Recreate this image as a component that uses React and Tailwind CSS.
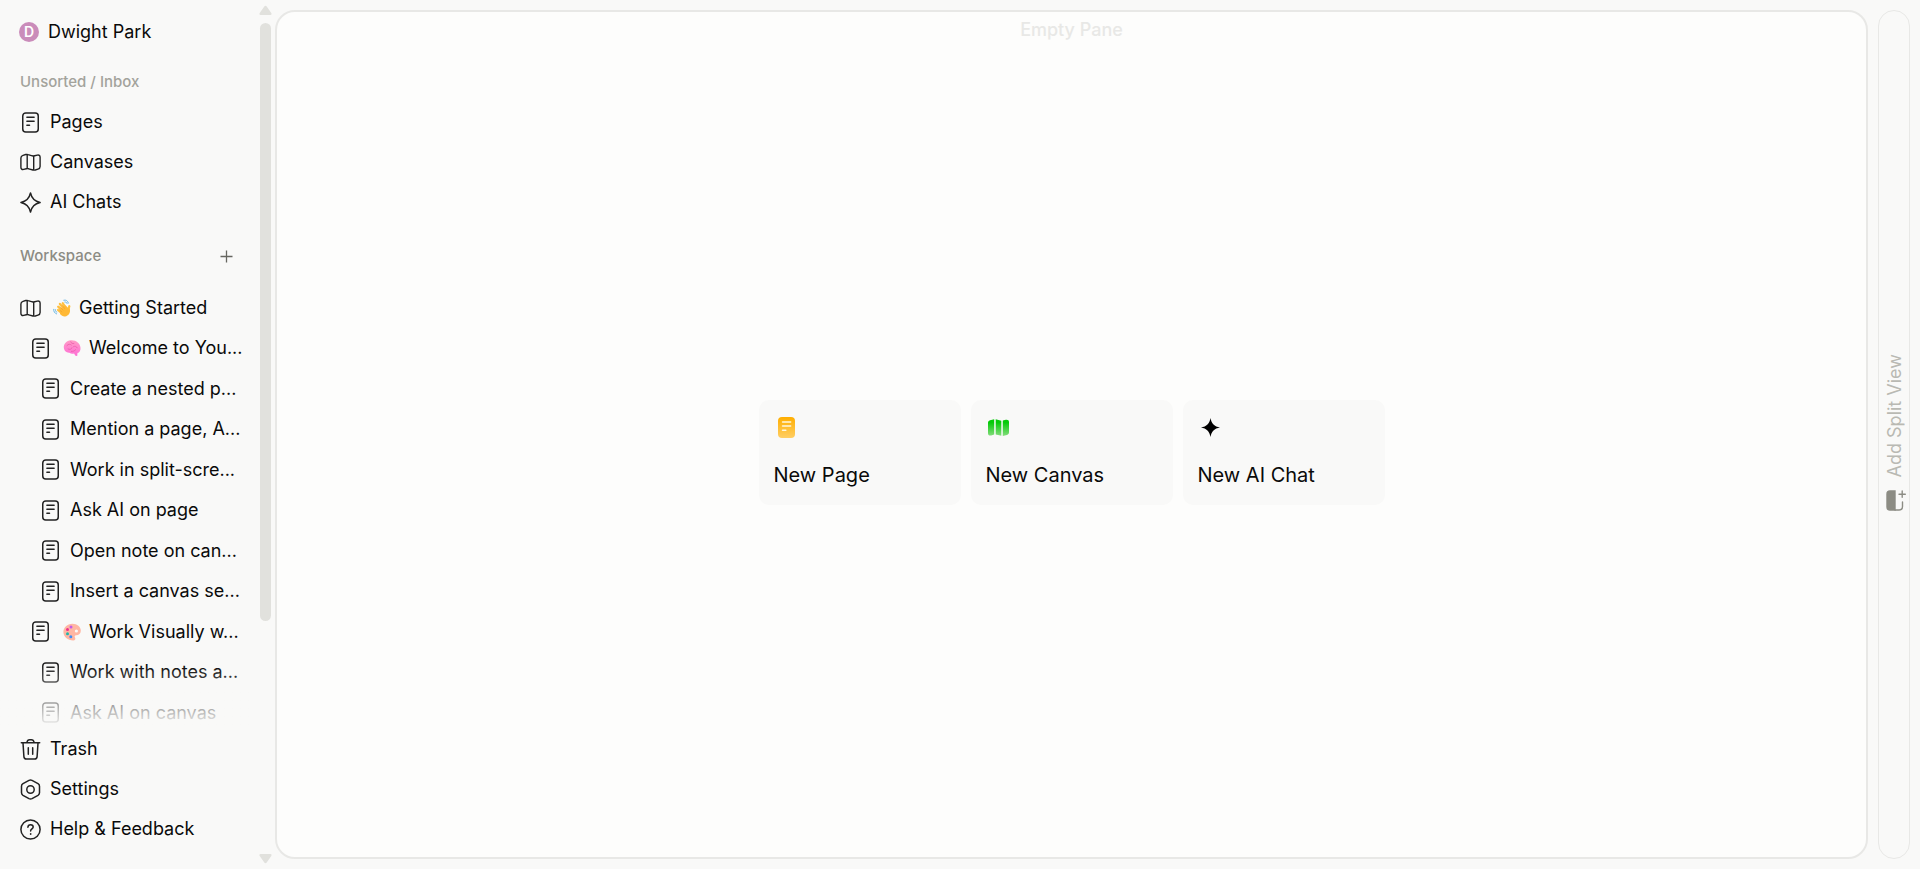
const ICON = "shrink-0";

const PageIcon = () => (
  <svg className={ICON} width="21" height="21" viewBox="0 0 21 21" fill="none" stroke="#222" strokeWidth="1.5" strokeLinecap="round">
    <rect x="2.75" y="0.9" width="15.5" height="19.2" rx="3" />
    <path d="M6.9 5.2h7.2M6.9 9.2h7.2M6.9 13.2h2.6" />
  </svg>
);

const MapIcon = () => (
  <svg className={ICON} width="21" height="21" viewBox="0 0 21 21" fill="none" stroke="#222" strokeWidth="1.4" strokeLinejoin="round">
    <path d="M.9 6c0-1.500.7-2.300 2.100-2.700l2.700-.8c.8-.2 1.600-.2 2.400.1l4.200 1.200c.8.200 1.600.2 2.400 0l2.600-.7c1.700-.4 2.800.4 2.800 2.100v9.300c0 1.400-.7 2.300-2.100 2.700l-2.700.8c-.8.2-1.600.2-2.400 0l-4.200-1.200c-.8-.2-1.600-.2-2.400 0l-2.600.6C2 17.800.9 17 .9 15.300zM7.200 2.600v14M13.700 4v14" />
  </svg>
);

const SparkIcon = () => (
  <svg className={ICON} width="21" height="21" viewBox="0 0 21 21" fill="none" stroke="#222" strokeWidth="1.5" strokeLinejoin="round">
    <path d="M10.5 .9C11.600 6.200 14.800 9.400 20.100 10.500 14.800 11.600 11.600 14.800 10.500 20.100 9.400 14.800 6.200 11.600 .9 10.500 6.200 9.400 9.400 6.200 10.500 .9z" />
  </svg>
);

const TrashIcon = () => (
  <svg className={ICON} width="21" height="21" viewBox="0 0 21 21" fill="none" stroke="#222" strokeWidth="1.5" strokeLinecap="round" strokeLinejoin="round">
    <path d="M1.300 3.800h18.400M3 4l.9 13.600c.1 1.500 1 2.400 2.500 2.400h8.200c1.500 0 2.400-.9 2.500-2.400L18 4M6.800 3.600C7.200 1.800 8.200.8 9.600.8h1.800c1.400 0 2.400 1 2.800 2.800M8.300 8.700v6.600M12.700 8.700v6.600" />
  </svg>
);

const SettingsIcon = () => (
  <svg className={ICON} width="21" height="21" viewBox="0 0 21 21" fill="none" stroke="#222" strokeWidth="1.5" strokeLinejoin="round">
    <path d="M9 1.300c1-.5 2-.5 3 0l6 3.400c1 .6 1.500 1.400 1.500 2.500v6.600c0 1.100-.5 1.900-1.500 2.500l-6 3.400c-1 .5-2 .5-3 0l-6-3.400c-1-.6-1.500-1.400-1.500-2.500V7.200c0-1.100.5-1.900 1.500-2.500z" />
    <circle cx="10.500" cy="10.500" r="3.700" />
  </svg>
);

const HelpIcon = () => (
  <svg className={ICON} width="21" height="21" viewBox="0 0 21 21" fill="none" stroke="#222" strokeWidth="1.5" strokeLinecap="round">
    <circle cx="10.500" cy="10.500" r="9.600" />
    <path d="M7.900 8.200c.1-1.600 1.200-2.500 2.700-2.500s2.600.9 2.600 2.300c0 1.900-2.600 2-2.600 4.100" />
    <circle cx="10.500" cy="15" r="0.400" fill="#222" strokeWidth="1" />
  </svg>
);

const WaveEmoji = () => (
  <svg className={ICON} width="18" height="18" viewBox="0 0 18 18" fill="none" strokeLinecap="round">
    <path d="M10.800 1.200c2.200-.6 3.900.5 4.600 2.800M11.800 3c1.200-.2 2 .4 2.300 1.500M.7 10.300c-.2 2.200.8 3.800 2.900 4.600M2.300 10.600c0 1.200.5 2.100 1.500 2.600" stroke="#6cb8e6" strokeWidth="1" />
    <path d="M5.200 7.800 10 12.500M6.900 4.900l5 6M9.800 4.300l4 6M5 11l4.600 4M16.300 7.200c-.8 1.500-.6 3-.4 4.500" stroke="#ffc03f" strokeWidth="2.300" />
    <path d="m7.200 9.500 5.300-3.300 4.300 4.500c.8 3-1.300 6.200-4.800 6.700-2 .2-3.500-.8-5-2.500z" fill="#ffb936" />
    <path d="m6.800 7.800 3.200 3.200M9 6.200l2.700 3.300M6.300 10.700l2.500 2.200" stroke="#ee9a2e" strokeWidth=".6" />
  </svg>
);

const BrainEmoji = () => (
  <svg className={ICON} width="18" height="18" viewBox="0 0 18 18" fill="none" strokeLinecap="round">
    <defs>
      <linearGradient id="brain" x1="0" y1="0" x2="0" y2="1">
        <stop stopColor="#ff9bc6" />
        <stop offset="1" stopColor="#ff6fd6" />
      </linearGradient>
    </defs>
    <path d="M.8 8.600C.5 5 3.500 1.800 7.800 1.300c5-.5 9.400 2.900 9.700 7.400.2 2.800-1 4.800-3 5.300l-.3 2.900-1.700-.2-1.500-2.100c-1.600.4-3.300.2-4.600-.8C3.300 14 1 11.800.8 8.600z" fill="url(#brain)" />
    <path d="M4 6.500c1.600-1.600 3-1.700 4.300-.5M7.700 2.800c.5 1.600 1.800 2 3.200 1.700M5 10c1.800 1 3.500.3 4-1.300M10.500 7.600c1.600-.8 3-.2 3.700 1.200M8.400 12.400c1.700.2 3.300-.5 4.300-1.700" stroke="#e858a8" strokeWidth=".7" />
  </svg>
);

const PaletteEmoji = () => (
  <svg className={ICON} width="18" height="18" viewBox="0 0 18 18">
    <path fillRule="evenodd" d="M.4 9C.4 4.500 4.300.8 9.300.8c5 0 8.500 3.200 8.500 7 0 3-2.200 4.600-4.700 4.500-1.600 0-1.700 1.200-1 2.400.7 1.300 0 2.700-1.800 2.700C4.700 17.400.4 13.600.4 9zM13.400 6.400a1.600 1.600 0 1 0 0 3.200 1.600 1.600 0 0 0 0-3.200z" fill="#ffb6a3" />
    <circle cx="8" cy="4" r="1.500" fill="#c45be8" />
    <circle cx="4.500" cy="6.600" r="1.500" fill="#f0308c" />
    <circle cx="4.500" cy="10.800" r="1.500" fill="#20b5ac" />
    <circle cx="7.800" cy="13.700" r="1.500" fill="#3d8df5" />
  </svg>
);

const NewPageIcon = () => (
  <svg width="25" height="25" viewBox="0 0 25 25" fill="none">
    <defs>
      <linearGradient id="page" x1="0" y1="0" x2="0" y2="1">
        <stop stopColor="#ffae00" />
        <stop offset="1" stopColor="#ffce63" />
      </linearGradient>
    </defs>
    <rect x="4" y="2" width="17" height="21" rx="4" fill="url(#page)" />
    <path d="M8.600 7h8M8.600 11h8M8.600 15.200h3.200" stroke="#fff7e0" strokeWidth="1.600" strokeLinecap="round" />
  </svg>
);

const NewCanvasIcon = () => (
  <svg width="25" height="25" viewBox="0 0 25 25">
    <defs>
      <linearGradient id="canvas" gradientUnits="userSpaceOnUse" x1="0" y1="4" x2="0" y2="21">
        <stop offset=".2" stopColor="#05cb08" />
        <stop offset="1" stopColor="#86dc7e" />
      </linearGradient>
    </defs>
    <path d="M8.200 4.300v15.200l-3 .9C3.300 20.900 2 20 2 18.200V8c0-1.500.7-2.400 2-2.800zM9.700 4.300l5.600 1.400v15l-5.600-1.300zM16.800 5.600l3-.8c1.900-.4 3.200.4 3.200 2.200v10.200c0 1.500-.7 2.300-2 2.700l-4.200 1z" fill="url(#canvas)" />
  </svg>
);

const NewChatIcon = () => (
  <svg width="25" height="25" viewBox="0 0 25 25">
    <path d="M12.500 3c1 5.600 3.900 8.500 9.500 9.500-5.600 1-8.500 3.900-9.500 9.500-1-5.600-3.900-8.500-9.500-9.500 5.600-1 8.500-3.900 9.500-9.500z" fill="#000" />
  </svg>
);

const SplitIcon = () => (
  <svg width="21" height="21" viewBox="0 0 21 21" fill="none" stroke="#8c8c84" strokeWidth="1.400" strokeLinecap="round">
    <path d="M10 1H5C3 1 2 2 2 4v13c0 2 1 3 3 3h5z" fill="#8c8c84" />
    <path d="M10 20h4c2.200 0 3.500-1.200 3.500-3.400V12M14 4.200h6.300M17.200 1v6.300" />
  </svg>
);

const inbox = [
  { label: "Pages", icon: PageIcon },
  { label: "Canvases", icon: MapIcon },
  { label: "AI Chats", icon: SparkIcon },
];

const workspace = [
  { label: "Getting Started", icon: MapIcon, emoji: WaveEmoji, indent: "pl-5" },
  { label: "Welcome to You...", icon: PageIcon, emoji: BrainEmoji, indent: "pl-[30px]" },
  { label: "Create a nested p...", icon: PageIcon, indent: "pl-10" },
  { label: "Mention a page, A...", icon: PageIcon, indent: "pl-10" },
  { label: "Work in split-scre...", icon: PageIcon, indent: "pl-10" },
  { label: "Ask AI on page", icon: PageIcon, indent: "pl-10" },
  { label: "Open note on can...", icon: PageIcon, indent: "pl-10" },
  { label: "Insert a canvas se...", icon: PageIcon, indent: "pl-10" },
  { label: "Work Visually w...", icon: PageIcon, emoji: PaletteEmoji, indent: "pl-[30px]" },
  { label: "Work with notes a...", icon: PageIcon, indent: "pl-10" },
  { label: "Ask AI on canvas", icon: PageIcon, indent: "pl-10" },
];

const footer = [
  { label: "Trash", icon: TrashIcon },
  { label: "Settings", icon: SettingsIcon },
  { label: "Help & Feedback", icon: HelpIcon },
];

const cards = [
  { label: "New Page", icon: NewPageIcon },
  { label: "New Canvas", icon: NewCanvasIcon },
  { label: "New AI Chat", icon: NewChatIcon },
];

const NavItem = ({ label, icon: Icon, emoji: Emoji, indent = "pl-5" }) => (
  <li>
    <a href="#" className={`flex h-10 items-center ${Emoji ? "gap-2" : "gap-[9px]"} ${indent}`}>
      <Icon />
      {Emoji && (
        <span className="pl-1">
          <Emoji />
        </span>
      )}
      <span className="whitespace-nowrap">{label}</span>
    </a>
  </li>
);

const Sidebar = () => (
  <aside className="flex w-[259px] shrink-0 flex-col">
    <button className="flex h-16 shrink-0 items-center gap-[9px] pl-[19px] text-left">
      <span className="flex size-5 items-center justify-center rounded-full bg-[#ca8cba] text-sm font-semibold text-white">
        D
      </span>
      Dwight Park
    </button>

    <nav className="relative min-h-0 flex-1 overflow-hidden">
      <h2 className="flex h-9 items-center pl-5 text-[15px] font-medium text-[#a3a39c]">
        Unsorted / Inbox
      </h2>
      <ul className="mt-0.5">
        {inbox.map((item) => (
          <NavItem key={item.label} {...item} />
        ))}
      </ul>

      <div className="mt-3.5 flex h-10 items-center justify-between pl-5 pr-[23px]">
        <h2 className="text-[15px] font-medium text-[#8c8c84]">Workspace</h2>
        <button aria-label="Add to workspace">
          <svg width="19" height="19" viewBox="0 0 19 19" stroke="#666660" strokeWidth="1.300">
            <path d="M9.500 3.500v12M3.500 9.500h12" />
          </svg>
        </button>
      </div>
      <ul className="mt-3 grid h-[445px] auto-rows-fr">
        {workspace.map((item) => (
          <NavItem key={item.label} {...item} />
        ))}
      </ul>
      {/* Bottom fade */}
      <div className="pointer-events-none absolute inset-x-0 bottom-0 h-16 bg-gradient-to-b from-transparent to-[#f9f9f8]" />
    </nav>

    <ul className="flex shrink-0 flex-col pb-5">
      {footer.map((item) => (
        <NavItem key={item.label} {...item} />
      ))}
    </ul>
  </aside>
);

const Scrollbar = () => (
  <div className="w-4 shrink-0">
    <div className="flex h-full w-[13px] flex-col items-center py-[5px]">
      <svg width="13" height="11" viewBox="0 0 13 11" fill="#e1e1dd">
        <path d="M5.300 1.500c.6-.9 1.700-.9 2.400 0l4.600 6.500c.6 1.100.2 2-.9 2H1.600C.5 10 .1 9.100.7 8z" />
      </svg>
      <div className="mt-[7px] w-[11px] flex-1">
        <div className="h-[72%] rounded-full bg-[#e1e1dd]" />
      </div>
      <svg width="13" height="11" viewBox="0 0 13 11" fill="#e1e1dd">
        <path d="M5.300 9.500c.6.900 1.700.9 2.400 0L12.300 3c.6-1.100.2-2-.9-2H1.600C.5 1 .1 1.900.7 3z" />
      </svg>
    </div>
  </div>
);

const App = () => {
  return (
    <div className="flex h-screen bg-[#f9f9f8] font-['Inter',sans-serif] text-[18px] leading-6 text-[#0a0a0a]">
      <Sidebar />
      <Scrollbar />

      <main className="my-2.5 flex min-w-0 flex-1 flex-col rounded-[20px] border-2 border-[#e8e8e6] bg-[#fdfdfc]">
        <h1 className="pt-1.5 text-center font-medium text-[#e8e8e6]">Empty Pane</h1>
        <div className="flex flex-1 items-center justify-center gap-2.5 pt-1.5">
          {cards.map(({ label, icon: Icon }) => (
            <button
              key={label}
              className="flex h-[105px] w-[202px] flex-col justify-between rounded-[10px] bg-[#f9f9f8] px-[15px] pt-[15px] pb-[18px] text-left text-[20px]"
            >
              <Icon />
              {label}
            </button>
          ))}
        </div>
      </main>

      <button className="m-2.5 flex w-8 shrink-0 items-center justify-center rounded-full border border-[#e8e8e6] pb-1 text-[#b9b9b3]">
        <span className="flex flex-col items-center gap-3 pl-0.5">
          <span className="rotate-180 [writing-mode:vertical-rl]">Add Split View</span>
          <SplitIcon />
        </span>
      </button>
    </div>
  );
};

export default App;
